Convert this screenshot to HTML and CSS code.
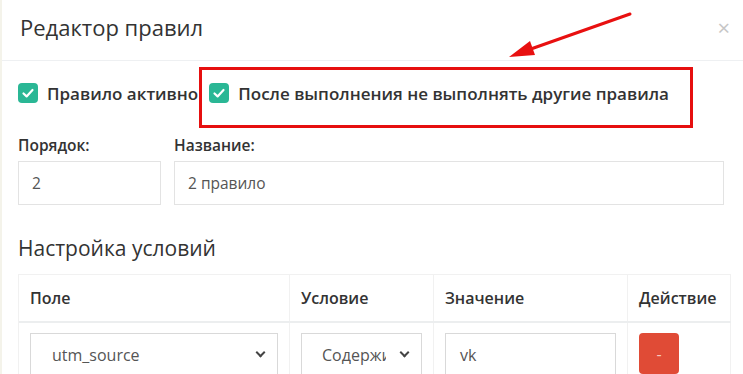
FILE: index.html
```html
<!DOCTYPE html>
<html lang="ru">

<head>
    <meta charset="UTF-8">
    <meta name="viewport" content="width=device-width, initial-scale=1.0">
    <title>Редактор правил</title>
    <link rel="stylesheet" href="styles.css">
</head>

<body>
    <div class="modal">
        <div class="modal-header">
            <h4 class="modal-title">Редактор правил</h4>
            <span class="close">&times;</span>
        </div>
        <div class="modal-body">
            <div class="checks">
                <label class="check">
                    <span class="box"><svg viewBox="0 0 18 18" width="18" height="18"><path d="M4.5 9.5 L7.6 12.4 L13.5 6" fill="none" stroke="#fff" stroke-width="2.2" stroke-linecap="round" stroke-linejoin="round"/></svg></span>
                    Правило активно
                </label>
                <label class="check">
                    <span class="box"><svg viewBox="0 0 18 18" width="18" height="18"><path d="M4.5 9.5 L7.6 12.4 L13.5 6" fill="none" stroke="#fff" stroke-width="2.2" stroke-linecap="round" stroke-linejoin="round"/></svg></span>
                    После выполнения не выполнять другие правила
                </label>
            </div>

            <div class="fields">
                <div class="field field-order">
                    <label>Порядок:</label>
                    <div class="input">2</div>
                </div>
                <div class="field field-name">
                    <label>Название:</label>
                    <div class="input">2 правило</div>
                </div>
            </div>

            <h3 class="section">Настройка условий</h3>

            <div class="table">
                <div class="row head">
                    <div class="cell">Поле</div>
                    <div class="cell">Условие</div>
                    <div class="cell">Значение</div>
                    <div class="cell">Действие</div>
                </div>
                <div class="row">
                    <div class="cell">
                        <div class="select sel-field">utm_source<span class="caret"></span></div>
                    </div>
                    <div class="cell">
                        <div class="select sel-cond"><span class="clip">Содержи</span><span class="caret"></span></div>
                    </div>
                    <div class="cell">
                        <div class="input val">vk</div>
                    </div>
                    <div class="cell">
                        <button class="btn-del">-</button>
                    </div>
                </div>
            </div>
        </div>
    </div>

    <!-- пометки поверх скриншота -->
    <div class="mark-box"></div>
    <svg class="mark-arrow" width="743" height="80" viewBox="0 0 743 80">
        <line x1="630" y1="14" x2="528" y2="50" stroke="#e81010" stroke-width="3" stroke-linecap="round"/>
        <polygon points="509,57 530,41 535,55" fill="#e81010"/>
    </svg>
</body>

</html>
```

FILE: styles.css
```css
* {
    box-sizing: border-box;
}

body {
    margin: 0;
    background: #fff;
    font-family: "Open Sans", "Noto Sans", sans-serif;
    color: #333;
    overflow: hidden;
}

.modal {
    width: 743px;
    height: 374px;
    background: #fff;
    border-left: 2px solid #f4f3ea;
}

.modal-header {
    display: flex;
    justify-content: space-between;
    align-items: center;
    height: 61px;
    padding: 0 13px 6px 18px;
    border-bottom: 1px solid #eef0f2;
}

.modal-title {
    margin: 0;
    font-size: 22px;
    font-weight: 400;
    color: #333;
}

.close {
    font-size: 22px;
    color: #c6c6c6;
    line-height: 1;
}

.modal-body {
    padding: 16px 0 0 16px;
}

.checks {
    display: flex;
    gap: 11px;
    height: 32px;
    align-items: center;
}

.check {
    display: flex;
    align-items: center;
    gap: 9px;
    font-size: 17px;
    font-weight: 600;
    color: #333;
}

.box {
    width: 20px;
    height: 20px;
    border-radius: 4px;
    background: #2ab795;
    display: flex;
    align-items: center;
    justify-content: center;
}

.fields {
    display: flex;
    gap: 13px;
    margin-top: 25px;
}

.field label {
    display: block;
    font-size: 15.5px;
    font-weight: 600;
    color: #333;
    height: 27px;
}

.input {
    height: 44px;
    border: 1px solid #e3e3e3;
    padding: 0 13px;
    display: flex;
    align-items: center;
    font-size: 15.5px;
    color: #555;
}

.field-order {
    width: 143px;
}

.field-name {
    width: 550px;
}

.section {
    margin: 29px 0 0;
    font-size: 21px;
    font-weight: 400;
    color: #333;
    height: 40px;
}

.table {
    width: 713px;
    border-top: 1px solid #f1f1f1;
    border-left: 1px solid #f1f1f1;
}

.row {
    display: grid;
    grid-template-columns: 271px 144px 194px 103px;
}

.row.head {
    height: 48px;
    border-bottom: 2px solid #eceeef;
}

.cell {
    border-right: 1px solid #f1f1f1;
    padding: 10px 11px 0 11px;
}

.head .cell {
    padding: 0 11px;
    display: flex;
    align-items: center;
    font-size: 16px;
    font-weight: 600;
    color: #333;
}

.select {
    height: 44px;
    border: 1px solid #d9d9d9;
    display: flex;
    align-items: center;
    justify-content: space-between;
    padding: 0 13px 0 21px;
    font-size: 16px;
    color: #555;
}

.sel-cond {
    padding-left: 20px;
}

.clip {
    width: 64px;
    overflow: hidden;
    white-space: nowrap;
}

.caret {
    width: 7px;
    height: 7px;
    border-right: 2px solid #444;
    border-bottom: 2px solid #444;
    transform: rotate(45deg);
    margin-top: -5px;
}

.val {
    width: 171px;
    border-color: #d9d9d9;
    padding-left: 14px;
    font-size: 16px;
}

.btn-del {
    width: 40px;
    height: 41px;
    border: none;
    border-radius: 4px;
    background: #e04b36;
    color: #f7c8bf;
    font-size: 16px;
    font-family: "Open Sans", sans-serif;
}

.mark-box {
    position: absolute;
    left: 199px;
    top: 67px;
    width: 494px;
    height: 61px;
    border: 3px solid #e60f0f;
}

.mark-arrow {
    position: absolute;
    left: 0;
    top: 0;
}
```
